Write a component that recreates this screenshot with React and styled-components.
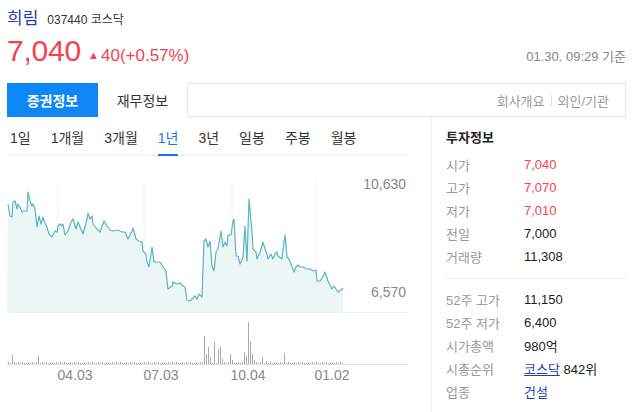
import React from 'react';
import styled, { createGlobalStyle } from 'styled-components';

const GlobalStyle = createGlobalStyle`
  html, body {
    margin: 0;
    padding: 0;
    background: #fff;
  }
  body {
    font-family: "Liberation Sans", "Noto Sans CJK KR", sans-serif;
    color: #222;
  }
`;

const Page = styled.div`
  width: 633px;
  height: 412px;
  box-sizing: border-box;
  padding: 0 7px;
  overflow: hidden;
`;

const Header = styled.div`
  padding-top: 4px;
`;

const TitleRow = styled.div`
  display: flex;
  align-items: baseline;
  gap: 9px;
  height: 24px;
`;

const Name = styled.span`
  font-size: 17px;
  color: #1d3db5;
`;

const Code = styled.span`
  font-size: 12px;
  color: #333;
`;

const PriceRow = styled.div`
  display: flex;
  align-items: baseline;
  justify-content: space-between;
  margin-top: 6px;
  height: 44px;
`;

const PriceBox = styled.div`
  display: flex;
  align-items: baseline;
  gap: 7px;
`;

const Price = styled.span`
  font-size: 30px;
  color: #f4434f;
  letter-spacing: -0.2px;
`;

const Change = styled.span`
  font-size: 17px;
  color: #f4434f;
`;

const Tri = styled.span`
  font-size: 11px;
  margin-right: 2px;
  position: relative;
  top: -2px;
`;

const Stamp = styled.span`
  font-size: 13px;
  color: #888;
`;

const TabBar = styled.div`
  margin-top: 5px;
  height: 34px;
  box-sizing: border-box;
  border: 1px solid #e6e6e6;
  display: flex;
  align-items: stretch;
`;

const Tab = styled.div`
  width: ${(p) => p.$w}px;
  margin: -1px 0 -1px -1px;
  display: flex;
  align-items: center;
  justify-content: center;
  font-size: 14px;
  font-weight: ${(p) => (p.$active ? 700 : 400)};
  color: ${(p) => (p.$active ? '#fff' : '#333')};
  background: ${(p) => (p.$active ? '#0f86f5' : '#fff')};
  border-right: 1px solid ${(p) => (p.$active ? '#0f86f5' : '#e6e6e6')};
`;

const TabLinks = styled.div`
  margin-left: auto;
  display: flex;
  align-items: center;
  gap: 6px;
  padding-right: 16px;
  font-size: 13px;
  color: #999;
`;

const Sep = styled.span`
  width: 1px;
  height: 11px;
  background: #ddd;
`;

const Body = styled.div`
  display: grid;
  grid-template-columns: 425px 1fr;
`;

const LeftCol = styled.div`
  border-right: 1px solid #eee;
  padding-right: 24px;
  height: 300px;
`;

const Periods = styled.div`
  display: flex;
  align-items: center;
  gap: 20px;
  height: 38px;
  padding-left: 3px;
  border-bottom: 1px solid #eee;
`;

const Period = styled.div`
  font-size: 14px;
  height: 38px;
  display: flex;
  align-items: center;
  box-sizing: border-box;
  color: ${(p) => (p.$active ? '#1478e8' : '#333')};
  border-bottom: 2px solid ${(p) => (p.$active ? '#1478e8' : 'transparent')};
  padding-top: 2px;
  margin-bottom: -1px;
`;

const ChartSvg = styled.svg`
  display: block;
`;

const RightCol = styled.div`
  padding: 10px 0 0 14px;
`;

const InfoTitle = styled.div`
  font-size: 13px;
  font-weight: 700;
  color: #222;
  height: 22px;
  line-height: 22px;
  margin-bottom: 4px;
`;

const Group = styled.div`
  padding: ${(p) => (p.$first ? '0 0 10px' : '9px 0 0')};
  border-bottom: ${(p) => (p.$first ? '1px solid #eee' : 'none')};
`;

const Row = styled.div`
  display: flex;
  align-items: center;
  height: 23px;
  font-size: 13px;
`;

const Label = styled.span`
  width: 78px;
  color: #999;
`;

const Value = styled.span`
  color: ${(p) => (p.$up ? '#f4434f' : '#222')};
`;

const Link = styled.span`
  color: #1d3db5;
  text-decoration: ${(p) => (p.$u ? 'underline' : 'none')};
`;

const pts = [
  [8, 205], [10, 217], [12, 218], [13, 203], [15, 202], [17, 210], [18, 205], [20, 208],
  [22, 213], [25, 212], [27, 212], [28, 193], [30, 202], [32, 207], [33, 205], [35, 210],
  [37, 228], [39, 217], [41, 225], [43, 218], [44, 222], [47, 228], [49, 235], [52, 238],
  [55, 232], [57, 233], [58, 227], [60, 225], [62, 227], [63, 225], [65, 236], [68, 232],
  [71, 223], [73, 220], [76, 230], [78, 223], [81, 230], [83, 235], [87, 220], [88, 214],
  [90, 220], [92, 217], [93, 225], [97, 230], [100, 233], [104, 222], [107, 227], [110, 231],
  [113, 232], [118, 231], [122, 233], [125, 233], [128, 240], [132, 232], [133, 229],
  [136, 240], [139, 242], [142, 243], [143, 252], [146, 255], [147, 263], [149, 268],
  [152, 248], [154, 263], [157, 263], [160, 263], [163, 268], [166, 272], [168, 290],
  [172, 287], [173, 283], [177, 285], [180, 284], [183, 287], [185, 288], [187, 301],
  [190, 302], [193, 299], [195, 297], [197, 300], [199, 295], [202, 298], [204, 242],
  [206, 240], [208, 248], [210, 242], [212, 267], [214, 272], [216, 253], [218, 250],
  [221, 232], [223, 248], [225, 243], [227, 247], [228, 236], [231, 236], [233, 222],
  [234, 220], [236, 257], [238, 257], [240, 265], [243, 258], [245, 227], [247, 262],
  [249, 200], [252, 233], [253, 250], [256, 253], [257, 260], [260, 253], [263, 243],
  [265, 250], [267, 255], [268, 260], [271, 255], [273, 260], [275, 255], [277, 253],
  [278, 257], [282, 260], [283, 250], [285, 236], [287, 258], [289, 260], [292, 268],
  [294, 273], [296, 268], [298, 266], [300, 268], [303, 268], [307, 270], [310, 270],
  [313, 272], [316, 271], [317, 282], [320, 282], [322, 279], [325, 273], [328, 282],
  [332, 290], [334, 287], [336, 290], [338, 293], [341, 291], [343, 289],
];

const spikes = {
  13: 356, 38: 357, 204: 337, 206: 355, 208: 348, 211: 358, 215: 343, 218: 350,
  221: 348, 223: 360, 231: 355, 233: 361, 245: 353, 247: 357, 249: 323, 250: 342,
  252: 355, 254: 361, 263: 358, 267: 362, 284: 354,
};

const volBars = [];
for (let x = 8; x <= 343; x += 2) {
  const s = spikes[x] || spikes[x + 1];
  const top = s ? s : 365 - (((x * 37) % 7) < 3 ? 2 : 1);
  volBars.push([x, top]);
}

const line = pts.map((p) => p.join(',')).join(' ');
const area = `7,313 ${line} 343,313`;

const Chart = () => (
  <ChartSvg width="401" height="240" viewBox="7 157 401 240">
    {[58, 144, 232, 316].map((x) => (
      <line key={x} x1={x} y1="183" x2={x} y2="313" stroke="#f2f2f2" strokeWidth="1" />
    ))}
    <polygon points={area} fill="#ecf6f4" />
    <polyline points={line} fill="none" stroke="#58b6c0" strokeWidth="1.2" strokeLinejoin="round" />
    <line x1="7" y1="313.5" x2="408" y2="313.5" stroke="#eee" />
    <text x="406" y="190" textAnchor="end" fontSize="14" fill="#888" fontFamily="Liberation Sans">10,630</text>
    <text x="406" y="298" textAnchor="end" fontSize="14" fill="#888" fontFamily="Liberation Sans">6,570</text>
    {volBars.map(([x, top]) => (
      <line key={x} x1={x + 0.5} y1={top} x2={x + 0.5} y2="365" stroke="#aaa" strokeWidth="1" />
    ))}
    <line x1="7" y1="365.5" x2="408" y2="365.5" stroke="#ddd" />
    {[['04.03', 75], ['07.03', 161], ['10.04', 248], ['01.02', 332]].map(([t, x]) => (
      <text key={t} x={x} y="381" textAnchor="middle" fontSize="14" fill="#888" fontFamily="Liberation Sans">
        {t}
      </text>
    ))}
  </ChartSvg>
);

const periods = ['1일', '1개월', '3개월', '1년', '3년', '일봉', '주봉', '월봉'];

export default function App() {
  return (
    <Page>
      <GlobalStyle />
      <Header>
        <TitleRow>
          <Name>희림</Name>
          <Code>037440 코스닥</Code>
        </TitleRow>
        <PriceRow>
          <PriceBox>
            <Price>7,040</Price>
            <Change>
              <Tri>▲</Tri>40(+0.57%)
            </Change>
          </PriceBox>
          <Stamp>01.30. 09:29 기준</Stamp>
        </PriceRow>
      </Header>
      <TabBar>
        <Tab $w={91} $active>증권정보</Tab>
        <Tab $w={89}>재무정보</Tab>
        <TabLinks>
          <span>회사개요</span>
          <Sep />
          <span>외인/기관</span>
        </TabLinks>
      </TabBar>
      <Body>
        <LeftCol>
          <Periods>
            {periods.map((p) => (
              <Period key={p} $active={p === '1년'}>{p}</Period>
            ))}
          </Periods>
          <Chart />
        </LeftCol>
        <RightCol>
          <InfoTitle>투자정보</InfoTitle>
          <Group $first>
            <Row><Label>시가</Label><Value $up>7,040</Value></Row>
            <Row><Label>고가</Label><Value $up>7,070</Value></Row>
            <Row><Label>저가</Label><Value $up>7,010</Value></Row>
            <Row><Label>전일</Label><Value>7,000</Value></Row>
            <Row><Label>거래량</Label><Value>11,308</Value></Row>
          </Group>
          <Group>
            <Row><Label>52주 고가</Label><Value>11,150</Value></Row>
            <Row><Label>52주 저가</Label><Value>6,400</Value></Row>
            <Row><Label>시가총액</Label><Value>980억</Value></Row>
            <Row><Label>시총순위</Label><Value><Link $u>코스닥</Link> 842위</Value></Row>
            <Row><Label>업종</Label><Link>건설</Link></Row>
          </Group>
        </RightCol>
      </Body>
    </Page>
  );
}
